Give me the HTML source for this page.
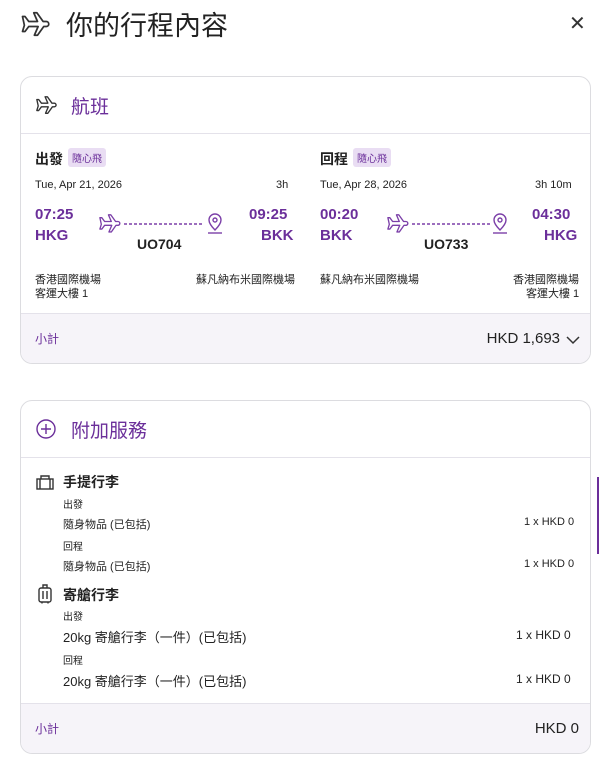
<!DOCTYPE html><html><head><meta charset="utf-8"><style>
*{margin:0;padding:0;box-sizing:border-box}
body{width:600px;height:776px;background:#fff;font-family:"Liberation Sans","Noto Sans CJK TC",sans-serif;color:#222;position:relative;overflow:hidden}
.a{position:absolute;white-space:nowrap}
.card{position:absolute;left:20px;width:571px;border:1px solid #dcdce0;border-radius:12px;overflow:hidden;background:#fff}
.foot{position:absolute;left:0;right:0;bottom:0;height:50px;background:#f6f4f9;border-top:1px solid #e4e2ea}
.p{color:#6b2f9a}
.tag{display:inline-block;background:#e9ddf3;color:#6b2f9a;font-size:10px;padding:2px 4px;border-radius:3px;vertical-align:2px;margin-left:5px;font-weight:normal}
.b{font-weight:bold}
</style></head><body>
<svg class="a" style="left:19px;top:9px" width="32" height="30" viewBox="0 0 24 24" fill="none" stroke="#333" stroke-width="1.4" stroke-linejoin="round"><path d="M2 6h2l3 4h7l-3-7h2.5l5 7h2.5a2 2 0 0 1 0 4H19l-5 7h-2.5l3-7H7l-3 4H2l1.5-5z"/></svg>
<div class="a" style="left:66px;top:4px;font-size:27px;color:#222">你的行程內容</div>
<div class="a" style="left:569px;top:11px;font-size:20px;color:#333">✕</div>

<div class="card" style="top:76px;height:288px">
 <div style="height:57px;border-bottom:1px solid #e4e2ea"></div>
 <svg class="a" style="left:14px;top:17px" width="22" height="22" viewBox="0 0 24 24" fill="none" stroke="#333" stroke-width="1.5" stroke-linejoin="round"><path d="M2 6h2l3 4h7l-3-7h2.5l5 7h2.5a2 2 0 0 1 0 4H19l-5 7h-2.5l3-7H7l-3 4H2l1.5-5z"/></svg>
 <div class="a p" style="left:50px;top:15px;font-size:19px">航班</div>
 <div class="foot"><div class="a p" style="left:14px;top:16px;font-size:12px">小計</div><div class="a" style="right:30px;top:16px;font-size:15px">HKD 1,693</div>
 <svg class="a" style="right:10px;top:21px" width="14" height="10" viewBox="0 0 14 10" fill="none" stroke="#333" stroke-width="1.5"><path d="M1 2l6 6 6-6"/></svg></div>
</div>

<div class="a b" style="left:35px;top:148px;font-size:14px">出發<span class="tag">隨心飛</span></div>
<div class="a" style="left:35px;top:179px;font-size:11px">Tue, Apr 21, 2026</div>
<div class="a" style="left:276px;top:179px;font-size:11px">3h</div>
<div class="a p b" style="left:35px;top:206px;font-size:15px">07:25</div>
<div class="a p b" style="left:35px;top:227px;font-size:15px">HKG</div>
<div class="a p b" style="left:249px;top:206px;font-size:15px">09:25</div>
<div class="a p b" style="left:261px;top:227px;font-size:15px">BKK</div>
<svg class="a" style="left:98px;top:213px" width="128" height="22" viewBox="0 0 128 22" fill="none" stroke="#7b3fa8" stroke-width="1.4"><g transform="translate(0,-1) scale(0.95)"><path d="M2 6h2l3 4h7l-3-7h2.5l5 7h2.5a2 2 0 0 1 0 4H19l-5 7h-2.5l3-7H7l-3 4H2l1.5-5z" stroke-linejoin="round"/></g><path d="M26 11h78" stroke-dasharray="3 2"/><path d="M117 17c-4-4-6-7-6-10a6 6 0 0 1 12 0c0 3-2 6-6 10z"/><circle cx="117" cy="7" r="2"/><path d="M110 20h14"/></svg>
<div class="a b" style="left:137px;top:236px;font-size:14px">UO704</div>
<div class="a" style="left:35px;top:271px;font-size:11px">香港國際機場</div>
<div class="a" style="left:35px;top:285px;font-size:11px">客運大樓 1</div>
<div class="a" style="left:196px;top:271px;font-size:11px">蘇凡納布米國際機場</div>

<div class="a b" style="left:320px;top:148px;font-size:14px">回程<span class="tag">隨心飛</span></div>
<div class="a" style="left:320px;top:179px;font-size:11px">Tue, Apr 28, 2026</div>
<div class="a" style="left:535px;top:179px;font-size:11px">3h 10m</div>
<div class="a p b" style="left:320px;top:206px;font-size:15px">00:20</div>
<div class="a p b" style="left:320px;top:227px;font-size:15px">BKK</div>
<div class="a p b" style="left:532px;top:206px;font-size:15px">04:30</div>
<div class="a p b" style="left:544px;top:227px;font-size:15px">HKG</div>
<svg class="a" style="left:386px;top:213px" width="128" height="22" viewBox="0 0 128 22" fill="none" stroke="#7b3fa8" stroke-width="1.4"><g transform="translate(0,-1) scale(0.95)"><path d="M2 6h2l3 4h7l-3-7h2.5l5 7h2.5a2 2 0 0 1 0 4H19l-5 7h-2.5l3-7H7l-3 4H2l1.5-5z" stroke-linejoin="round"/></g><path d="M26 11h78" stroke-dasharray="3 2"/><path d="M114 17c-4-4-6-7-6-10a6 6 0 0 1 12 0c0 3-2 6-6 10z"/><circle cx="114" cy="7" r="2"/><path d="M107 20h14"/></svg>
<div class="a b" style="left:424px;top:236px;font-size:14px">UO733</div>
<div class="a" style="left:320px;top:271px;font-size:11px">蘇凡納布米國際機場</div>
<div class="a" style="left:513px;top:271px;font-size:11px">香港國際機場</div>
<div class="a" style="left:526px;top:285px;font-size:11px">客運大樓 1</div>

<div class="card" style="top:400px;height:354px">
 <div style="height:57px;border-bottom:1px solid #e4e2ea"></div>
 <svg class="a" style="left:15px;top:18px" width="20" height="20" viewBox="0 0 20 20" fill="none" stroke="#6b2f9a" stroke-width="1.4"><circle cx="10" cy="10" r="9"/><path d="M10 5v10M5 10h10"/></svg>
 <div class="a p" style="left:50px;top:15px;font-size:19px">附加服務</div>
 <div class="foot"><div class="a p" style="left:14px;top:16px;font-size:12px">小計</div><div class="a" style="right:11px;top:16px;font-size:15px">HKD 0</div></div>
</div>
<svg class="a" style="left:36px;top:475px" width="18" height="15" viewBox="0 0 18 15" fill="none" stroke="#333" stroke-width="1.4"><rect x="1" y="4" width="16" height="10"/><path d="M5 4V1h8v3M4 4v10M14 4v10"/></svg>
<div class="a b" style="left:63px;top:472px;font-size:14px">手提行李</div>
<div class="a" style="left:63px;top:496px;font-size:10px">出發</div>
<div class="a" style="left:63px;top:516px;font-size:11px">隨身物品 (已包括)</div>
<div class="a" style="left:524px;top:516px;font-size:11px">1 x HKD 0</div>
<div class="a" style="left:63px;top:538px;font-size:10px">回程</div>
<div class="a" style="left:63px;top:558px;font-size:11px">隨身物品 (已包括)</div>
<div class="a" style="left:524px;top:558px;font-size:11px">1 x HKD 0</div>
<svg class="a" style="left:38px;top:584px" width="14" height="20" viewBox="0 0 14 20" fill="none" stroke="#333" stroke-width="1.4"><rect x="1" y="4" width="12" height="14" rx="2"/><path d="M5 4V1h4v3M5 7v8M9 7v8M4 18v1.5M10 18v1.5"/></svg>
<div class="a b" style="left:63px;top:585px;font-size:14px">寄艙行李</div>
<div class="a" style="left:63px;top:608px;font-size:10px">出發</div>
<div class="a" style="left:63px;top:627px;font-size:13px">20kg 寄艙行李（一件）(已包括)</div>
<div class="a" style="left:516px;top:628px;font-size:12px">1 x HKD 0</div>
<div class="a" style="left:63px;top:652px;font-size:10px">回程</div>
<div class="a" style="left:63px;top:671px;font-size:13px">20kg 寄艙行李（一件）(已包括)</div>
<div class="a" style="left:516px;top:672px;font-size:12px">1 x HKD 0</div>
<div class="a" style="left:597px;top:477px;width:2px;height:77px;background:#6b2f9a"></div>
</body></html>
